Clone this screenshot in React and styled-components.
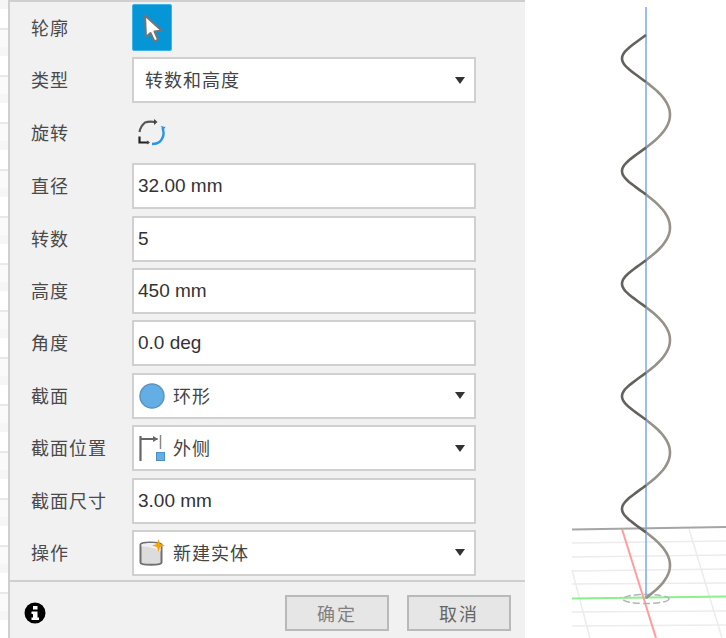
import React from 'react';
import styled, { createGlobalStyle } from 'styled-components';

const GlobalStyle = createGlobalStyle`
  html, body {
    margin: 0;
    padding: 0;
    background: #fff;
  }
`;

const Page = styled.div`
  display: flex;
  width: 726px;
  height: 638px;
  overflow: hidden;
  background: #fff;
  font-family: "Noto Sans CJK SC", "Liberation Sans", sans-serif;
`;

const Backdrop = styled.div`
  width: 8px;
  flex: none;
  background: repeating-linear-gradient(180deg, #f6f6f6 0 9px, #fff 9px 28px, #e9e9e9 28px 30px, #fafafa 30px 47px);
`;

const Panel = styled.section`
  width: 517px;
  flex: none;
  display: flex;
  flex-direction: column;
  box-sizing: border-box;
  background: #f1f1f1;
  border-left: 2px solid #cfcfcf;
  border-top: 2px solid #cfcfcf;
`;

const Form = styled.div`
  display: flex;
  flex-direction: column;
  gap: 6.4px;
  padding: 2px 49px 4.4px 0;
  border-bottom: 2px solid #cfcfcf;
`;

const Row = styled.div`
  display: flex;
  align-items: center;
  height: ${p => p.$tall ? 47 : 46}px;
`;

const Label = styled.label`
  width: 122px;
  flex: none;
  box-sizing: border-box;
  padding: 0 0 2px 21px;
  font-size: 18px;
  letter-spacing: 1px;
  color: #4a4a4a;
`;

const Field = styled.div`
  flex: 1;
  height: 46px;
  box-sizing: border-box;
  display: flex;
  align-items: center;
  gap: 8px;
  padding: 0 ${p => p.$select ? 9 : 4}px 0 ${p => p.$text ? 11 : p.$select ? 5 : 4}px;
  background: #fff;
  border: 2px solid #d0d0d0;
  font-family: "Liberation Sans", "Noto Sans CJK SC", sans-serif;
  font-size: 19px;
  color: #333;
`;

const ChoiceText = styled.span`
  padding-bottom: 2px;
  font-family: "Noto Sans CJK SC", sans-serif;
  font-size: 18px;
  letter-spacing: 1px;
  color: #444;
`;

const Caret = styled.span`
  margin-left: auto;
  width: 0;
  height: 0;
  border-left: 5.5px solid transparent;
  border-right: 5.5px solid transparent;
  border-top: 7px solid #333;
`;

const ToolButton = styled.button`
  width: 40px;
  height: 47px;
  padding: 0;
  display: flex;
  align-items: center;
  justify-content: center;
  background: #0696d7;
  border: 1px solid #3fb2e6;
  border-radius: 2px;
`;

const IconSlot = styled.div`
  display: flex;
  align-items: center;
  padding-left: 5px;
`;

const Footer = styled.footer`
  flex: 1;
  display: flex;
  align-items: center;
  justify-content: space-between;
  padding: 6px 14px 0 14px;
`;

const Buttons = styled.div`
  display: flex;
  gap: 18px;
`;

const ActionButton = styled.button`
  width: 104px;
  height: 36px;
  padding: 0;
  box-sizing: border-box;
  background: #e6e6e6;
  border: 2px solid #b9b9b9;
  font-family: "Noto Sans CJK SC", sans-serif;
  font-size: 18px;
  letter-spacing: 2px;
  color: ${p => p.disabled ? '#808080' : '#666'};
`;

const Viewport = styled.div`
  flex: 1;
  min-width: 0;
`;

const CursorIcon = () => (
  <svg width="24" height="30" viewBox="0 0 24 30">
    <path d="M5 2.500l1 21.500 4.500-4 4 8.500 3.500-2-3.500-8 7-1z" fill="#fff" stroke="#757575" strokeWidth="2" strokeLinejoin="round" />
  </svg>
);

const RotateIcon = () => (
  <svg width="30" height="30" viewBox="0 0 30 30">
    <path d="M2.500 14c.5-3 2.500-7 5.500-9.500C11 3.500 14 3.500 18 4" fill="none" stroke="#555" strokeWidth="2.200" />
    <path d="M17 1l3.500 3-3.500 3z" fill="#444" />
    <path d="M2.500 18.500V24.500h9" fill="none" stroke="#222" strokeWidth="2.200" />
    <path d="M10 22.500l3 2-3 2z" fill="#444" />
    <path d="M25.500 10c2 5 1 10-3 14-2 1.500-4.500 2-7.500 2" fill="none" stroke="#2a95e8" strokeWidth="2.400" />
    <path d="M23.500 8l5 1-2 3z" fill="#2a95e8" />
  </svg>
);

const CircleIcon = () => (
  <svg width="26" height="26" viewBox="0 0 26 26">
    <circle cx="13" cy="13" r="12" fill="#64aee6" stroke="#5b94bf" strokeWidth="1.500" />
  </svg>
);

const OffsetIcon = () => (
  <svg width="26" height="28" viewBox="0 0 26 28">
    <path d="M1.500 2v25M1.500 5h17" fill="none" stroke="#666" strokeWidth="2.200" />
    <path d="M14 2l5 3-5 3z" fill="#666" />
    <path d="M21.500 1v14" fill="none" stroke="#888" strokeWidth="1.500" />
    <rect x="17.500" y="18.500" width="8" height="8" fill="#64aee6" stroke="#4d8fc2" />
  </svg>
);

const NewBodyIcon = () => (
  <svg width="26" height="28" viewBox="0 0 26 28">
    <path d="M1.500 5.500c0-2.500 18-3 21 0v18c0 3-21 3-21 0z" fill="#dcdcdc" stroke="#707070" strokeWidth="2" />
    <path d="M2.500 5.500c3-2 16-2 19 0v7c-6-4-14-5-19-5z" fill="#efefef" />
    <path d="M19.500 0l1.500 5L26 6.500 21 8l-1.500 5L18 8l-5-1.500L18 5z" fill="#f5a400" />
  </svg>
);

const InfoIcon = () => (
  <svg width="22" height="22" viewBox="0 0 22 22">
    <circle cx="11" cy="11" r="10.500" fill="#000" />
    <rect x="9" y="4" width="4.500" height="3.500" fill="#fff" />
    <path d="M7.500 9.500h6v6h1.500v2.500H7.500v-2.500H9v-3.500H7.500z" fill="#fff" />
  </svg>
);

// helix seen from slightly above, left lobes are the near side
const helixLobe = index => {
  const points = [];
  for (let i = 0; i <= 24; i++) {
    const t = (index + i / 24) / 2;
    const angle = 2 * Math.PI * t;
    const x = 646 - 24 * Math.sin(angle);
    const y = 35 + 112.6 * t - 4.65 * (1 - Math.cos(angle));
    points.push(`${x.toFixed(1)},${y.toFixed(1)}`);
  }
  return points.join(' ');
};

const lobes = Array.from({ length: 10 }, (_, i) => i);

const Scene = () => (
  <svg width="201" height="638" viewBox="525 0 201 638">
    <g stroke="#ececec" strokeWidth="1.500" fill="none">
      <path d="M572 543l154-2M572 557l154-2M572 571l154-2M572 584l154-1M572 612l154-1M572 626l154-1" />
      <path d="M572 570l18 68M689 529l33 109" />
    </g>
    <path d="M572 529.500l154-2.500" stroke="#a5a5a5" strokeWidth="2" />
    <path d="M572 598.500l154-2" stroke="#8cf08c" strokeWidth="2" />
    <path d="M622 529l34 109" stroke="#ff9d9d" strokeWidth="2" />
    <ellipse cx="646" cy="599" rx="23" ry="4.500" fill="none" stroke="#b4b4b4" strokeWidth="1.500" strokeDasharray="7 3" />
    <path d="M646 7v592" stroke="#76a9f5" strokeWidth="1.500" />
    {lobes.map(i => (
      <polyline
        key={i}
        points={helixLobe(i)}
        fill="none"
        stroke={i % 2 === 0 ? '#65625d' : '#969289'}
        strokeWidth="2.600"
      />
    ))}
  </svg>
);

const textRows = [
  ['直径', '32.00 mm'],
  ['转数', '5'],
  ['高度', '450 mm'],
  ['角度', '0.0 deg'],
];

const App = () => (
  <Page>
    <GlobalStyle />
    <Backdrop />
    <Panel>
      <Form>
        <Row $tall>
          <Label>轮廓</Label>
          <ToolButton aria-label="轮廓"><CursorIcon /></ToolButton>
        </Row>
        <Row>
          <Label>类型</Label>
          <Field $select $text>
            <ChoiceText>转数和高度</ChoiceText>
            <Caret />
          </Field>
        </Row>
        <Row $tall>
          <Label>旋转</Label>
          <IconSlot><RotateIcon /></IconSlot>
        </Row>
        {textRows.map(([label, value]) => (
          <Row key={label}>
            <Label>{label}</Label>
            <Field>{value}</Field>
          </Row>
        ))}
        <Row>
          <Label>截面</Label>
          <Field $select>
            <CircleIcon />
            <ChoiceText>环形</ChoiceText>
            <Caret />
          </Field>
        </Row>
        <Row>
          <Label>截面位置</Label>
          <Field $select>
            <OffsetIcon />
            <ChoiceText>外侧</ChoiceText>
            <Caret />
          </Field>
        </Row>
        <Row>
          <Label>截面尺寸</Label>
          <Field>3.00 mm</Field>
        </Row>
        <Row>
          <Label>操作</Label>
          <Field $select>
            <NewBodyIcon />
            <ChoiceText>新建实体</ChoiceText>
            <Caret />
          </Field>
        </Row>
      </Form>
      <Footer>
        <InfoIcon />
        <Buttons>
          <ActionButton disabled>确定</ActionButton>
          <ActionButton>取消</ActionButton>
        </Buttons>
      </Footer>
    </Panel>
    <Viewport>
      <Scene />
    </Viewport>
  </Page>
);

export default App;
